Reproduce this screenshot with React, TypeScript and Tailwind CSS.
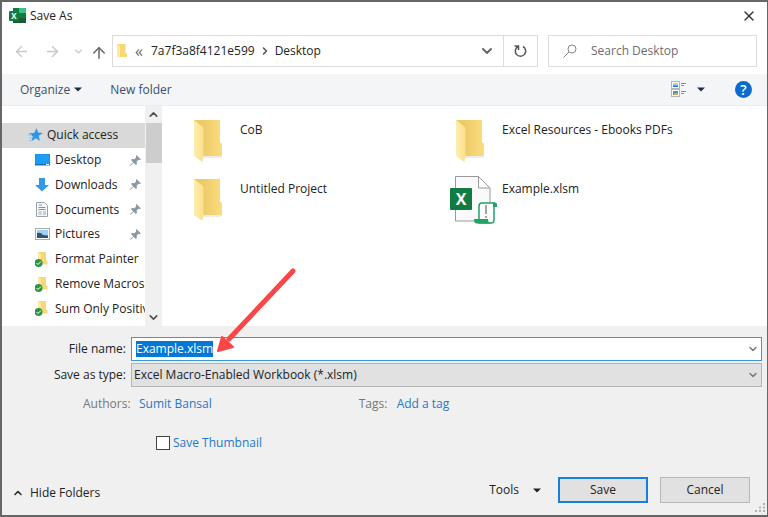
import React, { useEffect, useRef } from "react";
import { ArrowLeft, ArrowRight, ArrowUp, ChevronDown, ChevronRight, ChevronUp, X } from "lucide-react";

interface Place {
  name: string;
  icon: React.ReactNode;
  pinned?: boolean;
}

interface FileItem {
  name: string;
  kind: "folder" | "xlsm";
}

const ExcelLogo = () => (
  <svg width="17" height="16" viewBox="0 0 17 16" aria-hidden="true">
    <rect x="4" y="0" width="13" height="15" rx="1" fill="#21a366" />
    <rect x="4" y="0" width="6" height="8" fill="#107c41" />
    <rect x="10" y="0" width="7" height="5" fill="#33c481" />
    <rect x="4" y="8" width="13" height="7" fill="#185c37" />
    <rect x="10" y="5" width="7" height="5" fill="#107c41" />
    <rect x="0" y="3" width="10" height="10" rx="1" fill="#107c41" />
    <text x="5" y="11" textAnchor="middle" fontSize="8" fontWeight="700" fill="#fff" fontFamily="Open Sans">X</text>
  </svg>
);

const SmallFolder = () => (
  <svg width="10" height="14" viewBox="0 0 10 14" className="shrink-0" aria-hidden="true">
    <path d="M0 0h8.500v9l1.500 1v3H0z" fill="#f8d775" />
    <path d="M0 0l3 2v12L0 12.500z" fill="#fde9a5" />
  </svg>
);

const BigFolder = () => (
  <svg width="30" height="44" viewBox="0 0 30 44" aria-hidden="true">
    <defs>
      <linearGradient id="folderBack" x1="0" x2="1">
        <stop offset="0.3" stopColor="#edca68" />
        <stop offset="1" stopColor="#fbdc7e" />
      </linearGradient>
      <linearGradient id="folderFront" x1="0" x2="1">
        <stop offset="0" stopColor="#ffedad" />
        <stop offset="1" stopColor="#fbdf8c" />
      </linearGradient>
    </defs>
    <path d="M9 36h20l-3 2H9z" fill="#ececec" />
    <path d="M0 0h26v22l2 2v12H0z" fill="url(#folderBack)" />
    <path d="M0 0l9.500 7.500v28L8.500 42 0 36z" fill="url(#folderFront)" />
  </svg>
);

const ExcelFile = () => (
  <svg width="48" height="48" viewBox="0 0 48 48" aria-hidden="true">
    <path d="M5.500 .5h23L40 12v33H5.500z" fill="#fafafa" stroke="#999" />
    <path d="M28.500 .5v11.500H40z" fill="#fff" stroke="#999" />
    <rect x="0" y="12" width="22" height="22" rx="1" fill="#107c41" />
    <text x="11" y="29" textAnchor="middle" fontSize="16" fontWeight="700" fill="#fff" fontFamily="Open Sans">X</text>
    <path d="M32 27h12v17q0 3-3 3H29V30q0-3 3-3z" fill="#fff" stroke="#21a366" strokeWidth="1.500" />
    <path d="M43 26.500h2q2 0 2 2V31h-4z" fill="#21a366" />
    <path d="M24 43h14q0 4 3 4.500H27q-3 0-3-4.500z" fill="#21a366" />
    <path d="M36 29v9M36 40v2" stroke="#888" strokeWidth="1.500" />
  </svg>
);

const StarIcon = () => (
  <svg width="15" height="14" viewBox="0 0 15 14" className="shrink-0" aria-hidden="true">
    <path d="M8.600 0l1.400 4.600 4.800.4-4 2.800 1 5-4-2.600-4.300 3 1.300-5L1 5.200l5.200-.3z" fill="#2e95e8" />
    <path d="M0 7h4M1 10h3M1 12.500h2" stroke="#8cc4f2" />
  </svg>
);

const DesktopIcon = () => (
  <svg width="15" height="12" viewBox="0 0 15 12" aria-hidden="true">
    <rect width="15" height="11" fill="#1c9df5" />
    <path d="M0 0h15v11H0z" fill="none" stroke="#1683d8" />
    <path d="M0 10.500h15" stroke="#0f6fbd" />
    <path d="M11 10.500h3" stroke="#fff" />
  </svg>
);

const DownloadIcon = () => (
  <svg width="14" height="14" viewBox="0 0 14 14" aria-hidden="true">
    <path d="M4 0h6v7h4l-7 6.500L0 7h4z" fill="#3498e8" />
  </svg>
);

const DocumentIcon = () => (
  <svg width="14" height="15" viewBox="-1 0 14 15" aria-hidden="true">
    <path d="M.5.5h8l3 3v11H.5z" fill="#f4f6f8" stroke="#9aa3ab" />
    <path d="M3 3h3M2.500 5.500h7M2.500 7.500h7" stroke="#4fa3dd" />
    <path d="M2.500 10h3M7 10h3M2.500 12h3M7 12h3" stroke="#9aa9b5" />
  </svg>
);

const PictureIcon = () => (
  <svg width="15" height="12" viewBox="0 0 15 12" aria-hidden="true">
    <rect x=".5" y=".5" width="14" height="11" fill="#fff" stroke="#a5abb0" />
    <path d="M2 2h11v8H2z" fill="#9fd0f2" />
    <path d="M2 5q4-1 6 2l5 .5V10H2z" fill="#2f5473" />
  </svg>
);

const SyncedFolder = () => (
  <svg width="14" height="17" viewBox="0 0 14 17" aria-hidden="true">
    <path d="M3 1h8v8l1.500 1.500v3H3z" fill="#f8d775" />
    <path d="M3 1l3 2v11l-3-1z" fill="#fde9a5" />
    <circle cx="3.500" cy="12" r="4" fill="#2c9447" />
    <path d="M1.500 12l1.500 1.500 3-3" fill="none" stroke="#fff" />
  </svg>
);

const PinIcon = () => (
  <svg width="11" height="11" viewBox="0 0 11 11" aria-hidden="true">
    <path d="M6.500 0L11 4.500l-1.200.5-1.300-.2-1.800 1.800.2 2.400-1 1L3.700 7.800.5 10.700 0 10.500l.2-.6L3.200 7.200 1 5l1-1 2.500.2L6.200 2.500 6 1z" fill="#8996a3" />
  </svg>
);

const ViewIcon = () => (
  <svg width="16" height="17" viewBox="0 0 16 17" aria-hidden="true">
    <rect x=".5" y=".5" width="8" height="7" fill="#fff" stroke="#b5b5b5" />
    <path d="M2 2h5v4H2z" fill="#9fd0f2" />
    <path d="M2 4.500h5V6H2z" fill="#2876b5" />
    <rect x=".5" y="8.500" width="8" height="7" fill="#fff" stroke="#b5b5b5" />
    <path d="M2 10h5v4H2z" fill="#4a90c9" />
    <path d="M3 12h4v2H3z" fill="#e0a445" />
    <path d="M10 2.500h5M10 4.500h3M10 10.500h5M10 12.500h3" stroke="#8b8b8b" />
  </svg>
);

const Caret = () => (
  <svg width="8" height="5" viewBox="0 0 8 5" aria-hidden="true">
    <path d="M0 .5h8l-4 4z" fill="currentColor" />
  </svg>
);

const places: Place[] = [
  { name: "Desktop", icon: <DesktopIcon />, pinned: true },
  { name: "Downloads", icon: <DownloadIcon />, pinned: true },
  { name: "Documents", icon: <DocumentIcon />, pinned: true },
  { name: "Pictures", icon: <PictureIcon />, pinned: true },
  { name: "Format Painter", icon: <SyncedFolder /> },
  { name: "Remove Macros", icon: <SyncedFolder /> },
  { name: "Sum Only Positiv", icon: <SyncedFolder /> },
  { name: "", icon: <SyncedFolder /> },
];

const files: FileItem[] = [
  { name: "CoB", kind: "folder" },
  { name: "Excel Resources - Ebooks PDFs", kind: "folder" },
  { name: "Untitled Project", kind: "folder" },
  { name: "Example.xlsm", kind: "xlsm" },
];

const App: React.FC = () => {
  const nameRef = useRef<HTMLInputElement>(null);

  // The name comes up selected so that typing replaces it
  useEffect(() => {
    nameRef.current?.focus();
    nameRef.current?.select();
  }, []);

  return (
    <div className="flex h-screen min-h-[480px] flex-col overflow-hidden border-2 border-r border-[#666] bg-white font-['Open_Sans',sans-serif] text-xs text-[#222]">
      {/* Title bar */}
      <header className="flex h-7 shrink-0 items-center justify-between pr-[10px] pl-[7px]">
        <div className="flex items-center gap-1">
          <ExcelLogo />
          <h1>Save As</h1>
        </div>
        <button aria-label="Close" className="text-[#333]">
          <X size={16} strokeWidth={2} />
        </button>
      </header>

      {/* Navigation */}
      <nav className="flex shrink-0 items-center pt-[5px] pr-[10px] pb-[7px]">
        <div className="flex w-[110px] shrink-0 items-center pl-[11px] text-[#c8c8c8]">
          <button aria-label="Back" className="w-[31px]"><ArrowLeft size={17} strokeWidth={2} /></button>
          <button aria-label="Forward" className="w-[29px]"><ArrowRight size={17} strokeWidth={2} /></button>
          <button aria-label="Recent" className="w-[17px]"><ChevronDown size={11} strokeWidth={3} /></button>
          <button aria-label="Up" className="pt-[3px] text-[#666]"><ArrowUp size={18} strokeWidth={2} /></button>
        </div>
        <div className="flex h-8 flex-1 items-center border border-[#dcdcdc] pl-1">
          <SmallFolder />
          <span className="w-6 pl-2 text-base leading-4 text-[#666]">«</span>
          <button>7a7f3a8f4121e599</button>
          <ChevronRight size={12} strokeWidth={3} className="mx-1 text-[#555]" />
          <button>Desktop</button>
          <button aria-label="Previous locations" className="mr-2 ml-auto text-[#666]">
            <ChevronDown size={16} strokeWidth={3} />
          </button>
          <button aria-label="Refresh" className="flex h-full w-[34px] items-center justify-center border-l border-[#dcdcdc] text-[#555]">
            <svg width="13" height="14" viewBox="0 0 13 14" aria-hidden="true">
              <path d="M9 2.500A5.200 5.200 0 1 1 4 2.500M.5 2h4v4" fill="none" stroke="currentColor" strokeWidth="1.500" />
            </svg>
          </button>
        </div>
        <label className="ml-[10px] flex h-8 w-[209px] items-center border border-[#dcdcdc] pl-[14px]">
          <svg width="14" height="14" viewBox="0 0 14 14" className="shrink-0" aria-hidden="true">
            <path d="M6 8L.5 13.500" stroke="#888" />
            <circle cx="9" cy="5" r="4" fill="none" stroke="#888" />
          </svg>
          <input aria-label="Search Desktop" placeholder="Search Desktop" className="ml-[14px] w-full min-w-0 outline-none placeholder:text-[#6d6d6d]" />
        </label>
      </nav>

      {/* Toolbar */}
      <div className="flex h-8 shrink-0 items-center border-b border-[#ececee] bg-[#f4f5f7] pr-[15px] pl-[18px] text-[#3a4f6c]">
        <button className="flex items-center gap-1">Organize <span className="text-[#1e2f45]"><Caret /></span></button>
        <button className="ml-7">New folder</button>
        <button aria-label="Change your view" className="ml-auto flex items-center gap-[10px] text-[#1e2f45]">
          <ViewIcon />
          <Caret />
        </button>
        <button aria-label="Help" className="ml-[30px] size-[17px] rounded-full bg-[#0a6cce] text-sm leading-[17px] font-semibold text-white">?</button>
      </div>

      {/* Folder tree and files */}
      <main className="flex min-h-0 flex-1">
        <aside className="w-[143px] shrink-0 overflow-hidden pt-[17px]">
          <ul className="grid h-[223px] auto-rows-fr grid-cols-1">
            <li className="flex items-center gap-1 bg-[#d9d9d9] pl-[26px]">
              <StarIcon />
              Quick access
            </li>
            {places.map((place, i) => (
              <li key={i} className="flex items-center pr-1 pl-8 whitespace-nowrap">
                <span className="flex w-[21px] shrink-0 items-center pl-px">{place.icon}</span>
                {place.name}
                {place.pinned && <span className="ml-auto"><PinIcon /></span>}
              </li>
            ))}
          </ul>
        </aside>
        <div className="flex w-[17px] shrink-0 flex-col items-center bg-[#f0f0f0] text-[#505050]">
          <button aria-label="Scroll up" className="flex h-[17px] items-center"><ChevronUp size={13} strokeWidth={3} /></button>
          <div className="h-10 w-4 bg-[#cdcdcd]" />
          <button aria-label="Scroll down" className="mt-auto flex h-[17px] items-center"><ChevronDown size={13} strokeWidth={3} /></button>
        </div>
        <ul className="grid flex-1 auto-rows-[59px] grid-cols-[262px_1fr] pt-[11px] pl-[26px]">
          {files.map((file) => (
            <li key={file.name} className="flex items-start">
              <span className={file.kind === "folder" ? "w-[52px] pt-[3px] pl-[6px]" : "w-[52px]"}>
                {file.kind === "folder" ? <BigFolder /> : <ExcelFile />}
              </span>
              <span className="pt-[5px]">{file.name}</span>
            </li>
          ))}
        </ul>
      </main>

      {/* File details */}
      <footer className="relative shrink-0 bg-[#f0f0f0] pt-[11px] pr-[5px] pb-3">
        <div className="grid grid-cols-[124px_1fr] gap-x-[5px] gap-y-[2px]">
          <label htmlFor="file-name" className="self-center text-right">File name:</label>
          <div className="relative flex h-6 items-center border border-[#3d95de] bg-white pr-[2px] pl-1">
            <input
              id="file-name"
              ref={nameRef}
              defaultValue="Example.xlsm"
              className="min-w-0 flex-1 outline-none selection:bg-[#0078d7] selection:text-white"
            />
            <button aria-label="Recent names" className="text-[#777]"><ChevronDown size={12} strokeWidth={3} /></button>
            <svg className="pointer-events-none absolute bottom-[5px] left-[83px]" width="84" height="90" viewBox="0 0 84 90" aria-hidden="true">
              <path d="M78 6L14 74" stroke="#fa4646" strokeWidth="5" strokeLinecap="round" />
              <path d="M3 86L7 72l11 10z" fill="#fa4646" stroke="#fa4646" strokeWidth="2" strokeLinejoin="round" />
            </svg>
          </div>
          <label htmlFor="save-type" className="self-center text-right">Save as type:</label>
          <div className="relative">
            <select id="save-type" className="h-6 w-full appearance-none border border-[#b4b4b4] bg-[#e1e1e1] pl-[2px] outline-none">
              <option>Excel Macro-Enabled Workbook (*.xlsm)</option>
            </select>
            <ChevronDown size={12} strokeWidth={3} className="pointer-events-none absolute top-[6px] right-[3px] text-[#777]" />
          </div>
        </div>

        <div className="mt-[9px] flex pl-[81px] text-[#777]">
          <span className="w-14">Authors:</span>
          <button className="text-[#1f78cc]">Sumit Bansal</button>
          <span className="ml-[147px] w-[38px]">Tags:</span>
          <button className="text-[#1f78cc]">Add a tag</button>
        </div>

        <label className="mt-[23px] flex w-fit items-center gap-[3px] pl-[154px] text-[#1f78cc]">
          <input type="checkbox" className="size-[14px] appearance-none border border-[#444] bg-white" />
          Save Thumbnail
        </label>

        <div className="mt-[26px] flex items-center pr-3 pl-[10px]">
          <button className="mt-[6px] flex items-center gap-[6px]">
            <ChevronUp size={12} strokeWidth={3} />
            Hide Folders
          </button>
          <button className="ml-auto flex items-center gap-[14px]">
            Tools
            <Caret />
          </button>
          <button className="ml-[17px] h-[26px] w-[90px] border-2 border-[#1580dc] bg-[#e1e1e1]">Save</button>
          <button className="ml-[12px] h-[26px] w-[90px] border border-[#b8b8b8] bg-[#e1e1e1]">Cancel</button>
        </div>
        <svg className="absolute right-[2px] bottom-[2px]" width="10" height="10" viewBox="0 0 10 10" aria-hidden="true">
          <path d="M0 7h2v2H0zM4 7h2v2H4zM8 7h2v2H8zM4 3.500h2v2H4zM8 3.500h2v2H8zM8 0h2v2H8z" fill="#b3b3b3" />
        </svg>
      </footer>
    </div>
  );
};

export default App;
